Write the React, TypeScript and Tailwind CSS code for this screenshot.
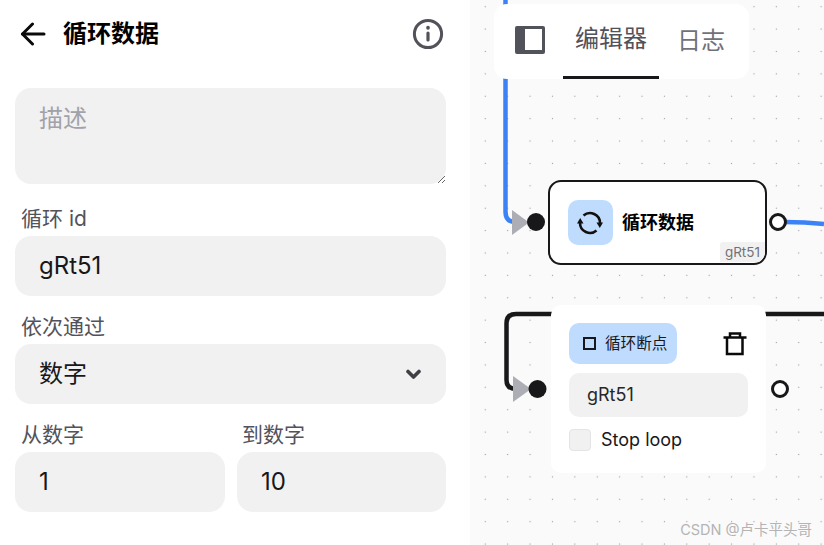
import React from 'react';

const FONT = "font-['Inter','Noto_Sans_CJK_SC',sans-serif]";

const Label: React.FC<{ text: string }> = ({ text }) => (
  <div className="px-1.5 h-[28px] mb-[3px] leading-[28px] text-[21px] text-[#52525b]">{text}</div>
);

const FieldInput: React.FC<{ value: string }> = ({ value }) => (
  <input
    readOnly
    defaultValue={value}
    className="w-full h-[60px] px-6 pb-[2px] rounded-2xl bg-[#f1f1f1] text-[24px] text-[#18181b] outline-none"
  />
);

const LoopIcon = () => (
  <svg width="26" height="26" viewBox="0 0 26 26" fill="none" stroke="#111" strokeWidth="2.600">
    <path d="M6.500 5.500A10 10 0 0 1 23 13" />
    <path d="M19.500 20.500A10 10 0 0 1 3 13" />
    <path d="M19.500 12.500H26L22.800 18Z" fill="#111" stroke="none" />
    <path d="M0 13.500H6.500L3.200 8Z" fill="#111" stroke="none" />
  </svg>
);

const SidePanel = () => (
  <div className="w-[470px] shrink-0 h-full bg-white pl-[15px] pr-6">
    <div className="h-[88px] pl-[5px] pr-0.5 pb-[20px] flex items-center justify-between">
      <div className="flex items-center gap-[17px]">
        <svg width="26" height="24" viewBox="0 0 26 24" fill="none" stroke="#0a0a0a" strokeWidth="3" strokeLinecap="round" strokeLinejoin="round">
          <path d="M24 12H2.500" />
          <path d="M12.500 2 2.500 12l10 10" />
        </svg>
        <h1 className="text-[24px] font-bold text-black leading-none">循环数据</h1>
      </div>
      <svg width="32" height="32" viewBox="0 0 32 32" fill="none" stroke="#52525b" strokeLinecap="round">
        <circle cx="16" cy="16" r="13.600" strokeWidth="3" />
        <path d="M16 15v7" strokeWidth="3.200" />
        <path d="M16 9.600v.4" strokeWidth="3.600" />
      </svg>
    </div>
    <textarea
      readOnly
      placeholder="描述"
      className="block w-full h-[96px] px-6 py-[13px] rounded-2xl bg-[#f1f1f1] text-[24px] leading-[36px] placeholder:text-[#a1a1aa] outline-none"
    />
    <div className="mt-[21px]">
      <Label text="循环 id" />
      <FieldInput value="gRt51" />
    </div>
    <div className="mt-[17px]">
      <Label text="依次通过" />
      <div className="h-[60px] pl-6 pr-[25px] rounded-2xl bg-[#f1f1f1] flex items-center justify-between text-[24px] text-[#18181b]">
        <span>数字</span>
        <svg width="15" height="11" viewBox="0 0 15 11" fill="none" stroke="#3f3f46" strokeWidth="3.600" strokeLinecap="round" strokeLinejoin="round">
          <path d="M2 2.500 7.500 8 13 2.500" />
        </svg>
      </div>
    </div>
    <div className="mt-[17px] flex gap-3">
      <div className="w-[210px]">
        <Label text="从数字" />
        <FieldInput value="1" />
      </div>
      <div className="w-[209px]">
        <div className="-ml-px">
          <Label text="到数字" />
        </div>
        <FieldInput value="10" />
      </div>
    </div>
  </div>
);

const Edges = () => (
  <svg className="absolute inset-0" width="354" height="545" viewBox="470 0 354 545" fill="none" strokeWidth="4.500">
    <path d="M505.500 0V212Q505.500 222 515.500 222H525" stroke="#3b82f6" />
    <path d="M785 222Q805 222 824 224" stroke="#3b82f6" />
    <path d="M560 314H516Q506.500 314 506.500 323.500V380Q506.500 389 516 389H525" stroke="#18181b" />
    <path d="M760 314H824" stroke="#18181b" />
    <path d="M512 210 529 222.500 512 235Z" fill="#adadb5" stroke="none" />
    <path d="M513 376 531 389 513 402Z" fill="#adadb5" stroke="none" />
    <circle cx="536" cy="222" r="9" fill="#18181b" stroke="none" />
    <circle cx="537.500" cy="389" r="9" fill="#18181b" stroke="none" />
    <circle cx="778" cy="222" r="7.500" fill="#fff" stroke="#18181b" strokeWidth="3" />
    <circle cx="780" cy="389" r="7.500" fill="#fff" stroke="#18181b" strokeWidth="3" />
  </svg>
);

const Toolbar = () => (
  <div className="absolute left-[24px] top-[4px] w-[255px] h-[75px] rounded-[13px] bg-white flex pl-[21px]">
    <div className="h-full flex items-center pb-[3px]">
      <svg width="30" height="28" viewBox="0 0 30 28">
        <rect width="30" height="28" rx="2" fill="#52525b" />
        <rect x="10" y="3" width="17" height="21" fill="#fff" />
      </svg>
    </div>
    <div className="ml-[18px] w-[96px] h-full border-b-[3px] border-[#18181b] flex items-center justify-center pt-[1px] pb-[3px] text-[24px] text-[#52525b]">
      编辑器
    </div>
    <div className="ml-[18px] h-full flex items-center pt-[1px] pb-[3px] text-[24px] text-[#71717a]">日志</div>
  </div>
);

const LoopNode = () => (
  <div className="absolute left-[78px] top-[180px] w-[219px] h-[85px] rounded-[13px] border-[2.500px] border-[#18181b] bg-white overflow-hidden flex items-center pl-[18px] gap-[9px]">
    <div className="w-[45px] h-[45px] pr-[2px] rounded-[10px] bg-[#bfdbfe] flex items-center justify-center">
      <LoopIcon />
    </div>
    <span className="text-[18px] font-bold text-black">循环数据</span>
    <span className="absolute right-0 bottom-[1px] h-[20px] px-[5px] rounded-tl-[3px] bg-[#f1f1f1] text-[13.500px] leading-[20px] text-[#71717a]">gRt51</span>
  </div>
);

const BreakNode = () => (
  <div className="absolute left-[81px] top-[305px] w-[215px] h-[168px] rounded-[10px] bg-white pl-[18px] pr-[18px] pt-[18px]">
    <div className="flex items-center justify-between h-[41px]">
      <div className="w-[108px] h-full rounded-[10px] bg-[#bfdbfe] flex items-center pl-[14px] gap-[9px]">
        <span className="w-[13px] h-[13px] border-2 border-[#18181b]" />
        <span className="text-[15.600px] text-[#18181b]">循环断点</span>
      </div>
      <svg className="mr-[1px]" width="24" height="24" viewBox="0 0 24 24" fill="none" stroke="#0a0a0a" strokeWidth="2.500">
        <path d="M0.500 5.500H23.500" />
        <path d="M7 5.500V1.500H17V5.500" />
        <path d="M4 5.500V22H19.500V5.500" />
      </svg>
    </div>
    <div className="mt-[9px] h-[44px] rounded-[10px] bg-[#f1f1f1] pl-[18px] pb-[2px] flex items-center text-[18px] text-[#27272a]">gRt51</div>
    <div className="mt-[12px] flex items-center gap-[10px]">
      <span className="w-[22px] h-[22px] rounded-[4px] border border-[#e4e4e7] bg-[#f1f1f1]" />
      <span className="text-[18px] leading-[22px] text-[#18181b]">Stop loop</span>
    </div>
  </div>
);

const App: React.FC = () => (
  <div className={`w-[824px] h-[545px] flex overflow-hidden ${FONT}`}>
    <SidePanel />
    <div className="relative flex-1 h-full overflow-hidden bg-[#fafafa] bg-[radial-gradient(circle,#a0a0a6_0.7px,transparent_1px)] bg-[size:22.400px_22.400px] bg-[position:4.100px_-4.500px]">
      <Edges />
      <Toolbar />
      <LoopNode />
      <BreakNode />
      <span className="absolute right-[12px] bottom-[4px] text-[14.500px] text-[#b4b4b4]">CSDN @卢卡平头哥</span>
    </div>
  </div>
);

export default App;
